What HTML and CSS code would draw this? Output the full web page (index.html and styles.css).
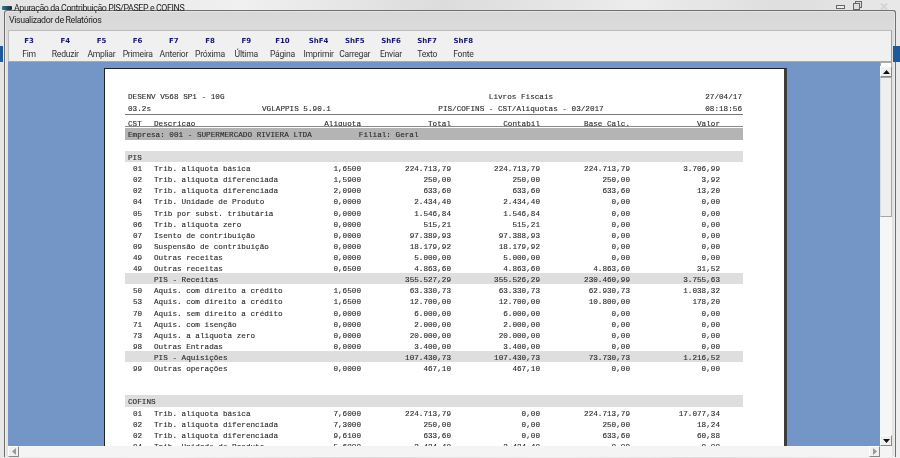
FILE: index.html
```html
<!DOCTYPE html>
<html lang="pt-BR">
<head>
<meta charset="utf-8">
<title>Apuração da Contribuição PIS/PASEP e COFINS</title>
<link rel="stylesheet" href="styles.css">
</head>
<body>
<div class="screen">
  <div class="glow-left"></div>
  <div class="glow-right"></div>
  <header class="titlebar">
    <span class="app-icon"></span>
    <span class="app-title">Apuração da Contribuição PIS/PASEP e COFINS</span>
    <div class="controls">
      <svg class="ctl-min" width="9" height="4" viewBox="0 0 9 4"><rect x="0.5" y="0.5" width="8" height="3" fill="#eee" stroke="#666"/></svg>
      <svg class="ctl-max" width="9" height="9" viewBox="0 0 9 9"><rect x="2.5" y="0.5" width="6" height="6" fill="#ddd" stroke="#666"/><rect x="0.5" y="2.5" width="6" height="6" fill="#ddd" stroke="#666"/></svg>
      <svg class="ctl-close" width="8" height="7" viewBox="0 0 8 7"><path d="M1 0.5 7 6.5M7 0.5 1 6.5" stroke="#d4d4d4" stroke-width="2"/></svg>
    </div>
  </header>
  <div class="window">
    <div class="win-title">Visualizador de Relatórios</div>
    <nav class="toolbar">
      <div class="tool"><b>F3</b><span>Fim</span></div>
      <div class="tool"><b>F4</b><span>Reduzir</span></div>
      <div class="tool"><b>F5</b><span>Ampliar</span></div>
      <div class="tool"><b>F6</b><span>Primeira</span></div>
      <div class="tool"><b>F7</b><span>Anterior</span></div>
      <div class="tool"><b>F8</b><span>Próxima</span></div>
      <div class="tool"><b>F9</b><span>Última</span></div>
      <div class="tool"><b>F10</b><span>Página</span></div>
      <div class="tool"><b>ShF4</b><span>Imprimir</span></div>
      <div class="tool"><b>ShF5</b><span>Carregar</span></div>
      <div class="tool"><b>ShF6</b><span>Enviar</span></div>
      <div class="tool"><b>ShF7</b><span>Texto</span></div>
      <div class="tool"><b>ShF8</b><span>Fonte</span></div>
    </nav>
    <div class="viewer">
      <div class="view-main">
        <main class="canvas">
          <article class="paper">
            <div class="rep-head"><span>DESENV V568 SP1 - 10G</span><span></span><span class="mid">Livros Fiscais</span><span class="end">27/04/17</span></div>
            <div class="rep-head"><span>03.2s</span><span>VGLAPPIS 5.90.1</span><span class="mid">PIS/COFINS - CST/Aliquotas - 03/2017</span><span class="end">08:18:56</span></div>
            <div class="rule"></div>
            <div class="row col-head"><span class="cst">CST</span><span>Descricao</span><span class="n">Aliquota</span><span class="n">Total</span><span class="n">Contabil</span><span class="n">Base Calc.</span><span class="n">Valor</span></div>
            <div class="empresa">Empresa: 001 - SUPERMERCADO RIVIERA LTDA<span class="filial">Filial: Geral</span></div>
            <div class="gap"></div>
            <div class="section">PIS</div>
            <div class="row"><span class="c">01</span><span>Trib. aliquota básica</span><span class="n">1,6500</span><span class="n">224.713,79</span><span class="n">224.713,79</span><span class="n">224.713,79</span><span class="n">3.706,99</span></div>
            <div class="row"><span class="c">02</span><span>Trib. aliquota diferenciada</span><span class="n">1,5900</span><span class="n">250,00</span><span class="n">250,00</span><span class="n">250,00</span><span class="n">3,92</span></div>
            <div class="row"><span class="c">02</span><span>Trib. aliquota diferenciada</span><span class="n">2,0900</span><span class="n">633,60</span><span class="n">633,60</span><span class="n">633,60</span><span class="n">13,20</span></div>
            <div class="row"><span class="c">04</span><span>Trib. Unidade de Produto</span><span class="n">0,0000</span><span class="n">2.434,40</span><span class="n">2.434,40</span><span class="n">0,00</span><span class="n">0,00</span></div>
            <div class="row"><span class="c">05</span><span>Trib por subst. tributária</span><span class="n">0,0000</span><span class="n">1.546,84</span><span class="n">1.546,84</span><span class="n">0,00</span><span class="n">0,00</span></div>
            <div class="row"><span class="c">06</span><span>Trib. aliquota zero</span><span class="n">0,0000</span><span class="n">515,21</span><span class="n">515,21</span><span class="n">0,00</span><span class="n">0,00</span></div>
            <div class="row"><span class="c">07</span><span>Isento de contribuição</span><span class="n">0,0000</span><span class="n">97.389,93</span><span class="n">97.388,93</span><span class="n">0,00</span><span class="n">0,00</span></div>
            <div class="row"><span class="c">09</span><span>Suspensão de contribuição</span><span class="n">0,0000</span><span class="n">18.179,92</span><span class="n">18.179,92</span><span class="n">0,00</span><span class="n">0,00</span></div>
            <div class="row"><span class="c">49</span><span>Outras receitas</span><span class="n">0,0000</span><span class="n">5.000,00</span><span class="n">5.000,00</span><span class="n">0,00</span><span class="n">0,00</span></div>
            <div class="row"><span class="c">49</span><span>Outras receitas</span><span class="n">0,6500</span><span class="n">4.863,60</span><span class="n">4.863,60</span><span class="n">4.863,60</span><span class="n">31,52</span></div>
            <div class="row total"><span class="c"></span><span>PIS - Receitas</span><span class="n"></span><span class="n">355.527,29</span><span class="n">355.526,29</span><span class="n">230.460,99</span><span class="n">3.755,63</span></div>
            <div class="row"><span class="c">50</span><span>Aquis. com direito a crédito</span><span class="n">1,6500</span><span class="n">63.330,73</span><span class="n">63.330,73</span><span class="n">62.930,73</span><span class="n">1.038,32</span></div>
            <div class="row"><span class="c">53</span><span>Aquis. com direito a crédito</span><span class="n">1,6500</span><span class="n">12.700,00</span><span class="n">12.700,00</span><span class="n">10.800,00</span><span class="n">178,20</span></div>
            <div class="row"><span class="c">70</span><span>Aquis. sem direito a crédito</span><span class="n">0,0000</span><span class="n">6.000,00</span><span class="n">6.000,00</span><span class="n">0,00</span><span class="n">0,00</span></div>
            <div class="row"><span class="c">71</span><span>Aquis. com isenção</span><span class="n">0,0000</span><span class="n">2.000,00</span><span class="n">2.000,00</span><span class="n">0,00</span><span class="n">0,00</span></div>
            <div class="row"><span class="c">73</span><span>Aquis. a aliquota zero</span><span class="n">0,0000</span><span class="n">20.000,00</span><span class="n">20.000,00</span><span class="n">0,00</span><span class="n">0,00</span></div>
            <div class="row"><span class="c">98</span><span>Outras Entradas</span><span class="n">0,0000</span><span class="n">3.400,00</span><span class="n">3.400,00</span><span class="n">0,00</span><span class="n">0,00</span></div>
            <div class="row total"><span class="c"></span><span>PIS - Aquisições</span><span class="n"></span><span class="n">107.430,73</span><span class="n">107.430,73</span><span class="n">73.730,73</span><span class="n">1.216,52</span></div>
            <div class="row"><span class="c">99</span><span>Outras operações</span><span class="n">0,0000</span><span class="n">467,10</span><span class="n">467,10</span><span class="n">0,00</span><span class="n">0,00</span></div>
            <div class="gap2"></div>
            <div class="section">COFINS</div>
            <div class="row"><span class="c">01</span><span>Trib. aliquota básica</span><span class="n">7,6000</span><span class="n">224.713,79</span><span class="n">0,00</span><span class="n">224.713,79</span><span class="n">17.077,34</span></div>
            <div class="row"><span class="c">02</span><span>Trib. aliquota diferenciada</span><span class="n">7,3000</span><span class="n">250,00</span><span class="n">0,00</span><span class="n">250,00</span><span class="n">18,24</span></div>
            <div class="row"><span class="c">02</span><span>Trib. aliquota diferenciada</span><span class="n">9,6100</span><span class="n">633,60</span><span class="n">0,00</span><span class="n">633,60</span><span class="n">60,88</span></div>
            <div class="row"><span class="c">04</span><span>Trib. Unidade de Produto</span><span class="n">5,6000</span><span class="n">2.434,40</span><span class="n">2.434,40</span><span class="n">0,00</span><span class="n">0,00</span></div>
          </article>
        </main>
        <div class="vscroll">
          <div class="v-cap"></div>
          <div class="sb-btn"><svg width="7" height="4" viewBox="0 0 7 4"><path d="M3.5 0 7 4H0z" fill="#111"/></svg></div>
          <div class="v-thumb"></div>
          <div class="v-track"></div>
          <div class="sb-btn"><svg width="7" height="4" viewBox="0 0 7 4"><path d="M0 0h7L3.500 4z" fill="#111"/></svg></div>
        </div>
      </div>
      <div class="hscroll">
        <div class="sb-btn h"><svg width="4" height="7" viewBox="0 0 4 7"><path d="M4 0v7L0 3.500z" fill="#999"/></svg></div>
        <div class="h-track"></div>
        <div class="sb-btn h"><svg width="4" height="7" viewBox="0 0 4 7"><path d="M0 0v7l4-3.500z" fill="#999"/></svg></div>
        <div class="h-corner"></div>
      </div>
    </div>
  </div>
</div>
</body>
</html>
```
FILE: styles.css
```css
* { box-sizing: border-box; }
html, body { margin: 0; padding: 0; }
body { width: 900px; height: 458px; overflow: hidden; background: #e6e6e6; }

.screen {
  position: relative;
  width: 900px;
  height: 458px;
  overflow: hidden;
  display: flex;
  flex-direction: column;
  font-family: Roboto, sans-serif;
  background: linear-gradient(100deg, #e4e4e4 0%, #f0f0f0 25%, #dcdcdc 45%, #ececec 65%, #dedede 80%, #f0f0f0 100%);
  filter: blur(0.4px);
}
.glow-left { position: absolute; left: 0; top: 46px; width: 3px; height: 16px; background: #1d5a9c; }
.glow-right { position: absolute; left: 893px; top: 46px; width: 7px; height: 16px; background: #1d5a9c; }

.titlebar {
  position: relative;
  height: 10px;
  flex: none;
  display: flex;
  align-items: center;
  padding-left: 2px;
  gap: 2px;
}
.app-icon { width: 10px; height: 4px; margin-top: 5px; background: linear-gradient(90deg, #2a7f8f, #223); border-radius: 1px; }
.app-title { font-size: 8.8px; letter-spacing: -0.38px; line-height: 10px; margin-top: 5px; color: #222; white-space: nowrap; }
.controls { position: absolute; left: 836px; top: 1px; display: flex; align-items: flex-start; }
.ctl-min { margin-top: 4px; }
.ctl-max { margin-left: 8px; }
.ctl-close { margin-left: 18px; margin-top: 2px; }

.window {
  margin: 0 4px 1px 4px;
  height: 447px;
  flex: none;
  border: 1px solid #6f6f6f;
  border-bottom: 0;
  border-radius: 3px 3px 0 0;
  padding: 0 3px 0 3px;
  background: linear-gradient(180deg, #d8d8d8, #e2e2e2 60px, #e4e4e4);
  display: flex;
  flex-direction: column;
  box-shadow: inset 0 0 0 1px rgba(255,255,255,.35);
}
.win-title { height: 19px; flex: none; font-size: 8.8px; letter-spacing: -0.36px; line-height: 19px; color: #222; padding-left: 1px; }

.toolbar {
  height: 32px;
  flex: none;
  display: flex;
  padding-left: 2px;
  background: #f0f0f0;
  border: 1px solid #bcbcbc;
  border-bottom: 1px solid #a8a8a8;
  border-right: 1px solid #a0a0a0;
}
.tool { width: 36.2px; flex: none; display: flex; flex-direction: column; align-items: center; white-space: nowrap; }
.tool b { font-family: "DejaVu Sans", sans-serif; font-size: 7px; line-height: 9px; margin-top: 6px; color: #16166e; }
.tool span { font-size: 8.6px; letter-spacing: -0.25px; line-height: 11px; margin-top: 3px; color: #333; }

.viewer { flex: 1; min-height: 0; display: flex; flex-direction: column; }
.view-main { flex: 1; min-height: 0; display: flex; }
.canvas { flex: 1; min-width: 0; overflow: hidden; background: #7396c6; padding: 6px 0 0 96px; }

.paper {
  width: 683px;
  height: 600px;
  background: #fff;
  border-top: 1px solid #222;
  border-left: 1px solid #222;
  border-right: 3.5px solid #3c3c3c;
  padding: 21px 0 0 20px;
  font-family: "Liberation Mono", monospace;
  font-size: 7.67px;
  color: #2a2a2a;
  -webkit-text-stroke: 0.12px #2a2a2a;
}
.rep-head {
  width: 618px;
  height: 11.5px;
  line-height: 14px;
  display: grid;
  grid-template-columns: 134px 176px 166px 1fr;
  padding: 0 1px 0 3px;
  white-space: nowrap;
}
.rep-head .mid { text-align: center; }
.rep-head .end { text-align: right; }
.rule { width: 618px; height: 1px; background: #777; margin-top: 1px; }
.row {
  width: 618px;
  height: 11.12px;
  line-height: 15px;
  display: grid;
  grid-template-columns: 29px 150px 57px 90px 89px 90px 90px;
  white-space: nowrap;
}
.row .c { padding-left: 8px; }
.row .cst { padding-left: 3px; }
.row .n { text-align: right; }
.row.total { background: #dedede; }
.col-head { height: 12px; line-height: 19px; overflow: hidden; border-bottom: 1.5px solid #8a8a8a; }
.empresa { width: 618px; height: 11.5px; line-height: 15px; background: #b4b4b4; padding-left: 3px; margin-top: 1px; white-space: nowrap; }
.filial { margin-left: 47px; }
.gap { height: 11.5px; }
.gap2 { height: 22.24px; }
.section { width: 618px; height: 11.12px; line-height: 14px; background: #dedede; padding-left: 3px; }

.vscroll { width: 12px; flex: none; display: flex; flex-direction: column; background: #f4f4f4; }
.v-cap { height: 4px; background: #fff; border: 1px solid #aaa; border-bottom: 0; }
.sb-btn {
  flex: none;
  height: 11px;
  background: #f0f0f0;
  border-top: 1px solid #fff;
  border-left: 1px solid #fff;
  border-right: 1px solid #888;
  border-bottom: 1px solid #888;
  display: flex;
  align-items: center;
  justify-content: center;
}
.v-thumb { height: 140px; flex: none; background: #efefef; border: 1px solid #a6a6a6; border-left-color: #ddd; }
.v-track { flex: 1; background: #f6f6f6; }
.hscroll { height: 11px; flex: none; display: flex; background: #f4f4f4; }
.sb-btn.h { width: 11px; height: 11px; background: #f0f0f0; }
.h-track { flex: 1; background: #f4f4f4; }
.h-corner { width: 12px; flex: none; background: #f4f4f4; }
```
